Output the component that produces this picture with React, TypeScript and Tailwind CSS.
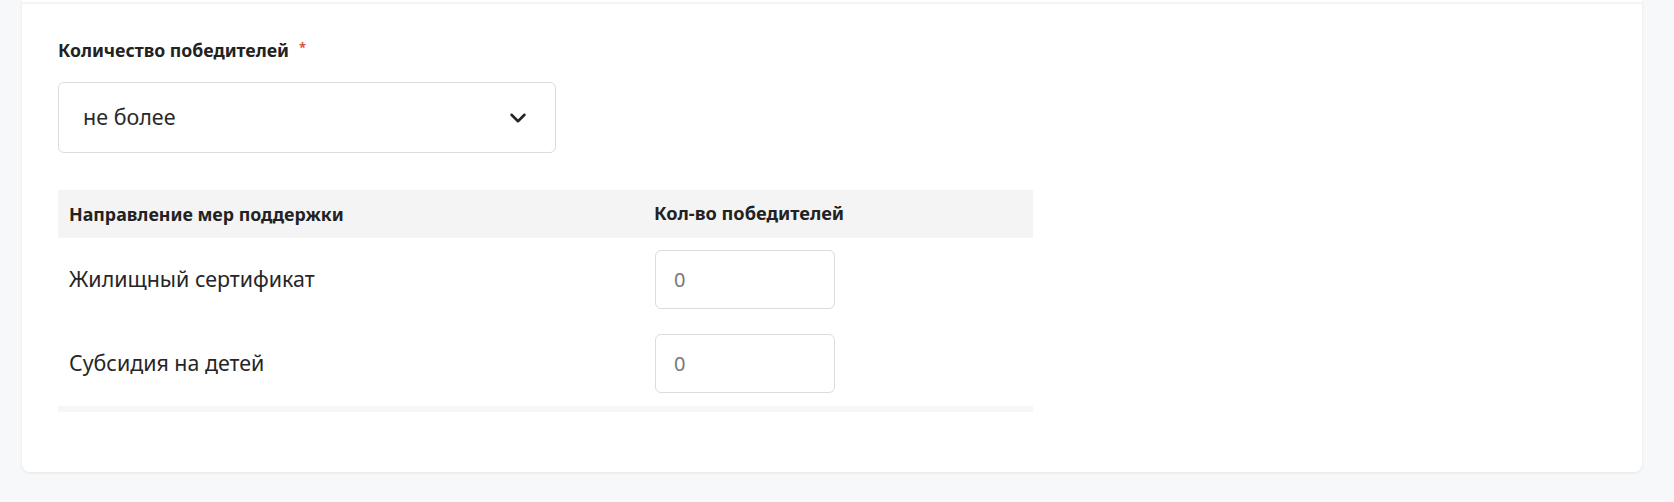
import React from "react";
import { ChevronDown } from "lucide-react";

const rows = ["Жилищный сертификат", "Субсидия на детей"];

export default function App() {
  return (
    <div
      className="min-h-[502px] w-[1674px] bg-[#f7f8fa] text-[#222]"
      style={{ fontFamily: '"Noto Sans", "Open Sans", Arial, sans-serif' }}
    >
      <div className="ml-[22px] w-[1620px] rounded-b-[8px] bg-white shadow-[0_1px_3px_rgba(0,0,0,0.08)]">
        <div className="h-[2px]" />
        <div className="h-[2px] bg-[#f4f4f5]" />
        <div className="px-[36px] pb-[60px] pt-[34px]">
          <div className="flex items-center text-[17.7px] font-bold leading-[24px]">
            <span>Количество победителей</span>
            <span className="ml-[10px] -mt-[6px] text-[13px] text-[#d9553a]">*</span>
          </div>
          <div className="mt-[20px] flex h-[71px] w-[498px] items-center justify-between rounded-[6px] border border-[#dcdce0] pl-[24px] pr-[24px]">
            <span className="text-[21.5px] text-[#2a2a2a]">не более</span>
            <ChevronDown size={26} strokeWidth={2.3} className="text-[#222]" />
          </div>
          <div className="mt-[37px] w-[975px]">
            <div className="flex h-[48px] items-center bg-[#f4f4f4] text-[17.8px] font-bold">
              <div className="w-[60%] pl-[11px]">Направление мер поддержки</div>
              <div className="w-[40%] pl-[11px] text-[18.2px]">Кол-во победителей</div>
            </div>
            {rows.map((r) => (
              <div key={r} className="flex items-center pb-[13px] pt-[12px]">
                <div className="w-[60%] pl-[11px] text-[21.4px] text-[#262626]">{r}</div>
                <div className="w-[40%] pl-[12px]">
                  <div className="flex h-[59px] w-[180px] items-center rounded-[6px] border border-[#dcdce0] pl-[18px] text-[20px] text-[#777]">
                    0
                  </div>
                </div>
              </div>
            ))}
            <div className="h-[6px] bg-[#f6f6f6]" />
          </div>
        </div>
      </div>
    </div>
  );
}
